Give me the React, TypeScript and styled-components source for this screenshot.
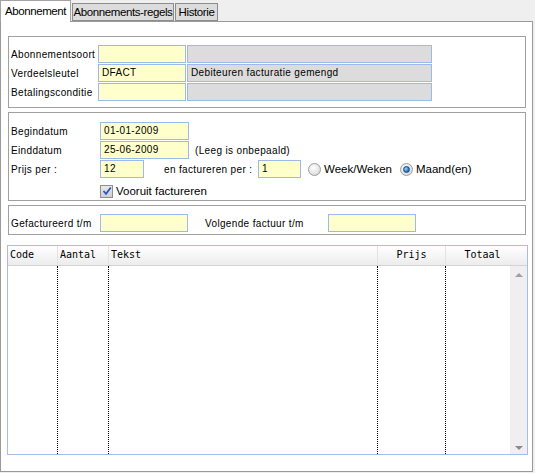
import React from 'react';
import styled, { createGlobalStyle } from 'styled-components';

const GlobalStyle = createGlobalStyle`
  html, body {
    margin: 0;
    padding: 0;
    background: #ffffff;
  }
  body {
    font-family: "Liberation Sans", Arial, sans-serif;
    color: #000;
  }
`;

const Window = styled.div`
  width: 535px;
  height: 473px;
  display: flex;
  flex-direction: column;
  background: #efefef;
`;

const TabStrip = styled.div`
  height: 21px;
  display: flex;
  align-items: flex-end;
  position: relative;
  z-index: 2;
`;

const Tab = styled.div<{ $active?: boolean; $w: number }>`
  box-sizing: border-box;
  width: ${(p) => p.$w}px;
  height: ${(p) => (p.$active ? '22px' : '18px')};
  padding-top: ${(p) => (p.$active ? '3px' : '1px')};
  margin-bottom: ${(p) => (p.$active ? '-1px' : '0')};
  background: ${(p) => (p.$active ? '#ffffff' : '#dcdcdc')};
  border: 1px solid ${(p) => (p.$active ? '#a3a3a3' : '#8c8c8c')};
  border-bottom: ${(p) => (p.$active ? 'none' : '1px solid #8c8c8c')};
  font-size: 11.5px;
  letter-spacing: -0.4px;
  line-height: 15px;
  text-align: center;
  white-space: nowrap;
  overflow: hidden;
  margin-right: 1px;
`;

const Panel = styled.div`
  box-sizing: border-box;
  width: 533px;
  height: 451px;
  background: #ffffff;
  border: 1px solid #9a9a9a;
  padding: 14px 6px 0 7px;
  display: flex;
  flex-direction: column;
  gap: 4px;
`;

const Group = styled.div<{ $h: number; $pt: number }>`
  box-sizing: border-box;
  width: 518px;
  height: ${(p) => p.$h}px;
  border: 1px solid #a0a0a0;
  padding: ${(p) => p.$pt}px 0 0 2px;
  display: flex;
  flex-direction: column;
  gap: 1px;
`;

const Row = styled.div<{ $mt?: number }>`
  display: flex;
  align-items: center;
  height: 18px;
  margin-top: ${(p) => p.$mt ?? 0}px;
`;

const Label = styled.div<{ $w: number }>`
  width: ${(p) => p.$w}px;
  flex: none;
  font-size: 10px;
  letter-spacing: 0.35px;
  white-space: nowrap;
`;

const Field = styled.div<{ $w: number; $gray?: boolean }>`
  box-sizing: border-box;
  width: ${(p) => p.$w}px;
  height: 18px;
  flex: none;
  background: ${(p) => (p.$gray ? '#dcdcdc' : '#ffffcc')};
  border: 1px solid #9db9e8;
  font-size: 10px;
  letter-spacing: 0.35px;
  line-height: 16px;
  padding-left: 3px;
  margin-right: 1px;
  white-space: nowrap;
`;

const Note = styled.div<{ $ml: number; $w?: number }>`
  margin-left: ${(p) => p.$ml}px;
  ${(p) => (p.$w ? `width: ${p.$w}px; flex: none;` : '')}
  font-size: 10px;
  letter-spacing: 0.35px;
  white-space: nowrap;
`;

const Option = styled.label<{ $ml?: number }>`
  display: flex;
  align-items: center;
  gap: 3px;
  margin-left: ${(p) => p.$ml ?? 0}px;
  font-size: 11.5px;
  white-space: nowrap;
`;

const Radio = styled.span<{ $on?: boolean }>`
  box-sizing: border-box;
  width: 13px;
  height: 13px;
  border-radius: 50%;
  border: 1px solid #9c9c9c;
  background: radial-gradient(circle at 40% 35%, #ffffff 0%, #e4e4e4 60%, #c8c8c8 100%);
  display: flex;
  align-items: center;
  justify-content: center;
  &::after {
    content: '';
    display: ${(p) => (p.$on ? 'block' : 'none')};
    width: 5px;
    height: 5px;
    border-radius: 50%;
    background: radial-gradient(circle at 35% 35%, #9fd4ff 0%, #1f7fd6 60%, #0a4fa0 100%);
    border: 1px solid #23466e;
  }
`;

const CheckBox = styled.span`
  box-sizing: border-box;
  width: 13px;
  height: 13px;
  border: 1px solid #8f8f8f;
  background: linear-gradient(#e9e9e9, #cfcfcf);
  display: flex;
  align-items: center;
  justify-content: center;
`;

const Grid = styled.div`
  box-sizing: border-box;
  width: 521px;
  height: 210px;
  margin-top: 6px;
  margin-left: -1px;
  border: 1px solid #a6bde8;
  display: flex;
  flex-direction: column;
`;

const Header = styled.div`
  display: flex;
  height: 19px;
  flex: none;
  background: linear-gradient(#ffffff, #ececec);
  border-bottom: 1px solid #d4d4d4;
`;

const HeadCell = styled.div<{ $w: number; $center?: boolean }>`
  box-sizing: border-box;
  width: ${(p) => p.$w}px;
  flex: none;
  border-right: 1px solid #e2e2e2;
  font-family: "DejaVu Sans Mono", monospace;
  font-size: 10px;
  line-height: 18px;
  padding-left: ${(p) => (p.$center ? 0 : 2)}px;
  text-align: ${(p) => (p.$center ? 'center' : 'left')};
  white-space: nowrap;
  &:last-child {
    border-right: none;
  }
`;

const Body = styled.div`
  flex: 1;
  display: flex;
`;

const Col = styled.div<{ $w: number }>`
  box-sizing: border-box;
  width: ${(p) => p.$w}px;
  flex: none;
  border-right: 1px dotted #000;
`;

const Scroll = styled.div`
  width: 17px;
  margin-left: auto;
  background: #efefef;
  display: flex;
  flex-direction: column;
  justify-content: space-between;
  align-items: center;
  padding: 7px 0 4px;
  box-sizing: border-box;
`;

const Arrow = styled.span<{ $down?: boolean }>`
  width: 0;
  height: 0;
  border-left: 4px solid transparent;
  border-right: 4px solid transparent;
  ${(p) =>
    p.$down ? 'border-top: 4px solid #8a8a8a;' : 'border-bottom: 4px solid #a0a0a0;'}
`;

export default function App() {
  return (
    <>
      <GlobalStyle />
      <Window>
        <TabStrip>
          <Tab $active $w={71}>Abonnement</Tab>
          <Tab $w={102}>Abonnements-regels</Tab>
          <Tab $w={43}>Historie</Tab>
        </TabStrip>
        <Panel>
          <Group $h={72} $pt={8}>
            <Row>
              <Label $w={87}>Abonnementsoort</Label>
              <Field $w={88} />
              <Field $w={245} $gray />
            </Row>
            <Row>
              <Label $w={87}>Verdeelsleutel</Label>
              <Field $w={88}>DFACT</Field>
              <Field $w={245} $gray>Debiteuren facturatie gemengd</Field>
            </Row>
            <Row>
              <Label $w={87}>Betalingsconditie</Label>
              <Field $w={88} />
              <Field $w={245} $gray />
            </Row>
          </Group>
          <Group $h={89} $pt={9}>
            <Row>
              <Label $w={89}>Begindatum</Label>
              <Field $w={89}>01-01-2009</Field>
            </Row>
            <Row>
              <Label $w={89}>Einddatum</Label>
              <Field $w={89}>25-06-2009</Field>
              <Note $ml={5}>(Leeg is onbepaald)</Note>
            </Row>
            <Row>
              <Label $w={89}>Prijs per :</Label>
              <Field $w={44}>12</Field>
              <Note $ml={19} $w={94}>en factureren per :</Note>
              <Field $w={43}>1</Field>
              <Option $ml={6}>
                <Radio />
                Week/Weken
              </Option>
              <Option $ml={8}>
                <Radio $on />
                Maand(en)
              </Option>
            </Row>
            <Row $mt={3}>
              <Label $w={89} />
              <Option>
                <CheckBox>
                  <svg width="10" height="10" viewBox="0 0 10 10">
                    <path d="M1.5 5 L4 7.8 L8.8 1.5" fill="none" stroke="#2a56c6" strokeWidth="1.8" />
                  </svg>
                </CheckBox>
                Vooruit factureren
              </Option>
            </Row>
          </Group>
          <Group $h={30} $pt={8}>
            <Row>
              <Label $w={89}>Gefactureerd t/m</Label>
              <Field $w={88} />
              <Note $ml={16} $w={123}>Volgende factuur t/m</Note>
              <Field $w={88} />
            </Row>
          </Group>
          <Grid>
            <Header>
              <HeadCell $w={50}>Code</HeadCell>
              <HeadCell $w={51}>Aantal</HeadCell>
              <HeadCell $w={269}>Tekst</HeadCell>
              <HeadCell $w={68} $center>Prijs</HeadCell>
              <HeadCell $w={73} $center>Totaal</HeadCell>
            </Header>
            <Body>
              <Col $w={50} />
              <Col $w={51} />
              <Col $w={269} />
              <Col $w={68} />
              <Scroll>
                <Arrow />
                <Arrow $down />
              </Scroll>
            </Body>
          </Grid>
        </Panel>
      </Window>
    </>
  );
}
